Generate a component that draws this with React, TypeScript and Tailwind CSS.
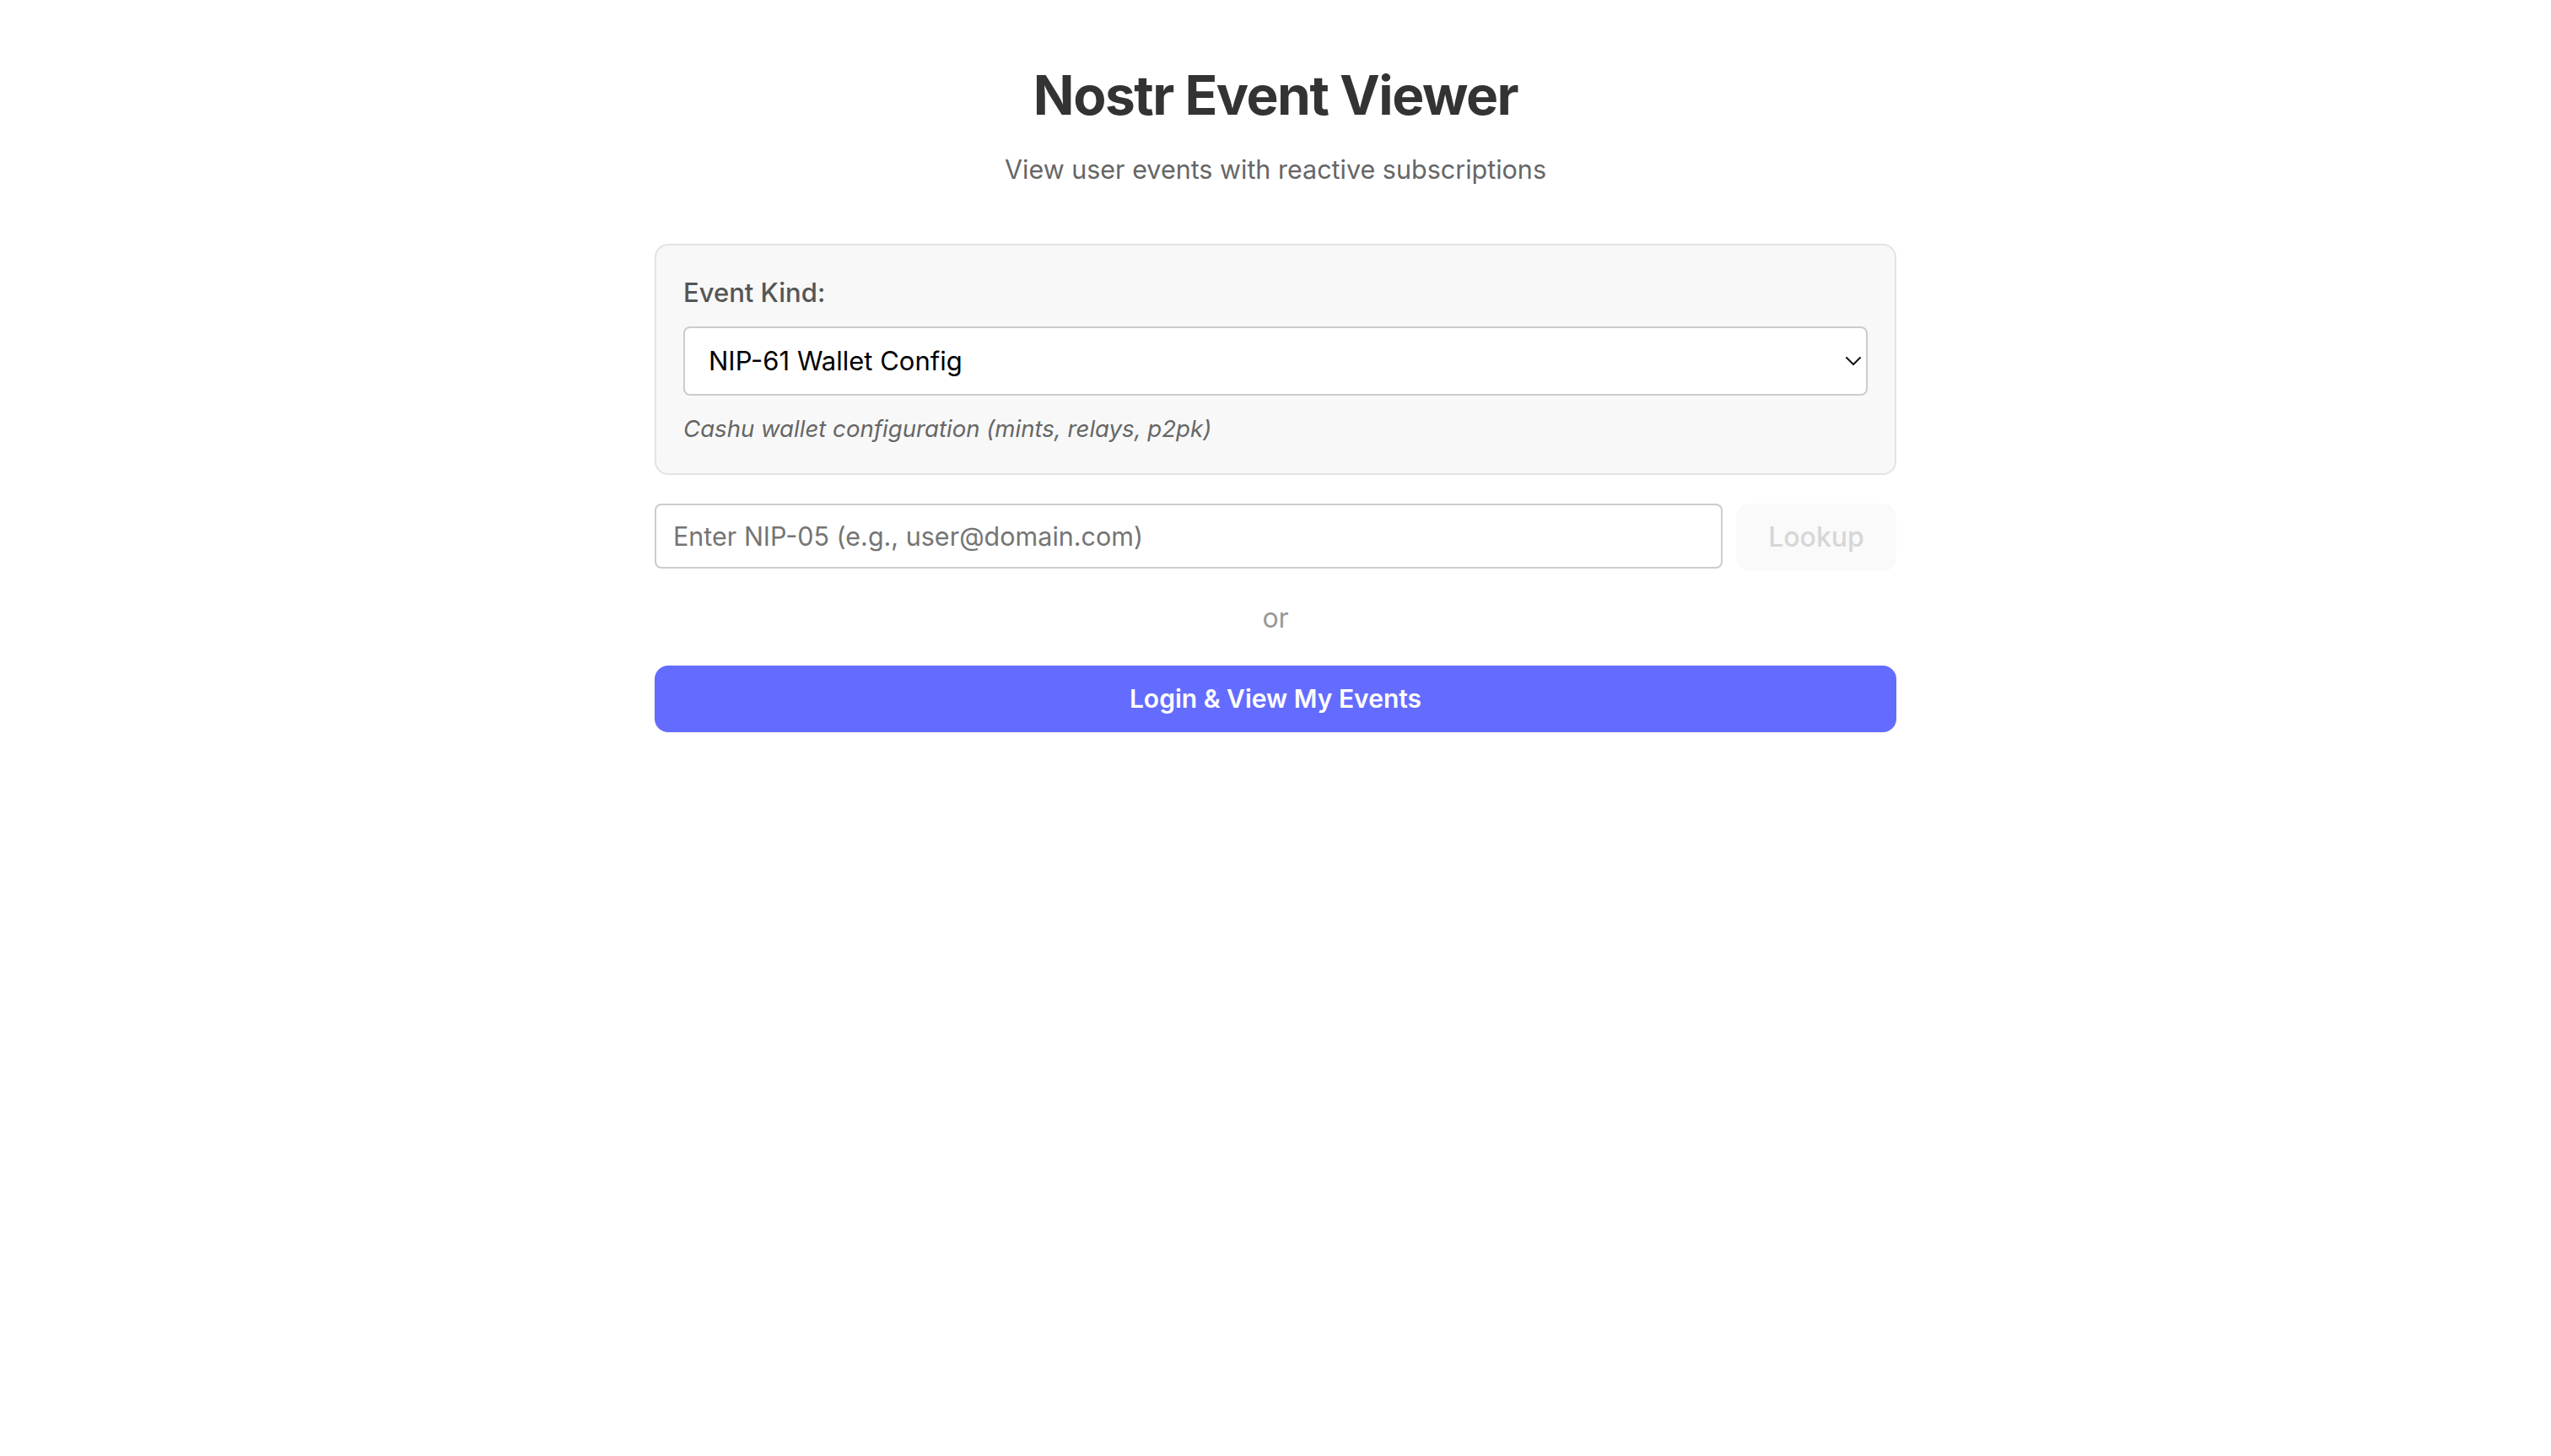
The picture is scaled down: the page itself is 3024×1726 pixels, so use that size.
import { useState } from "react";

const KINDS = [
  { value: "17375", label: "NIP-61 Wallet Config", hint: "Cashu wallet configuration (mints, relays, p2pk)" },
  { value: "1", label: "Short Text Note", hint: "Plain text notes" },
  { value: "0", label: "Metadata", hint: "User profile metadata" },
];

function Chevron() {
  return (
    <svg
      className="pointer-events-none absolute right-[8px] top-1/2 -translate-y-1/2"
      width="18"
      height="10"
      viewBox="0 0 18 10"
      fill="none"
    >
      <path d="M1 1l8 8 8-8" stroke="#111" strokeWidth="2" strokeLinecap="round" strokeLinejoin="round" />
    </svg>
  );
}

export default function App() {
  const [kind, setKind] = useState(KINDS[0].value);
  const [nip05, setNip05] = useState("");
  const current = KINDS.find((k) => k.value === kind) ?? KINDS[0];

  return (
    <div className="min-h-screen bg-white font-['Inter',sans-serif] antialiased">
      <div className="mx-auto max-w-[1600px] px-[64px] pt-[73px]">
        <h1 className="text-center text-[64px] leading-[80px] font-bold text-[#333] tracking-[-1.5px]">
          Nostr Event Viewer
        </h1>
        <p className="mt-[28px] text-center text-[30.5px] leading-[40px] text-[#666]">
          View user events with reactive subscriptions
        </p>

        <div className="mt-[68px] rounded-[16px] border-2 border-[#e3e3e3] bg-[#f8f8f8] px-[32px] pt-[36px] pb-[35px]">
          <label className="block text-[31px] leading-[40px] font-medium text-[#555]">Event Kind:</label>
          <div className="relative mt-[20px]">
            <select
              value={kind}
              onChange={(e) => setKind(e.target.value)}
              className="block h-[82px] w-full appearance-none rounded-[8px] border-2 border-[#ccc] bg-white pl-[28px] pr-[40px] text-[31px] text-black outline-none"
            >
              {KINDS.map((k) => (
                <option key={k.value} value={k.value}>
                  {k.label}
                </option>
              ))}
            </select>
            <Chevron />
          </div>
          <p className="mt-[21px] text-[27.6px] leading-[36px] italic text-[#666]">{current.hint}</p>
        </div>

        <div className="mt-[34px] flex gap-[16px]">
          <input
            value={nip05}
            onChange={(e) => setNip05(e.target.value)}
            placeholder="Enter NIP-05 (e.g., user@domain.com)"
            className="h-[77px] flex-1 rounded-[8px] border-2 border-[#ccc] bg-white px-[20px] text-[30.5px] text-black outline-none placeholder:text-[#757575]"
          />
          <button
            disabled={!nip05.trim()}
            className="h-[80px] w-[190px] rounded-[16px] bg-[#fafafa] text-[32px] font-medium text-[#d6d6d6]"
          >
            Lookup
          </button>
        </div>

        <div className="mt-[36px] text-center text-[32px] leading-[40px] text-[#999]">or</div>

        <button className="mt-[36px] h-[79px] w-full rounded-[16px] bg-[#646cff] text-[30px] font-semibold text-white">
          Login &amp; View My Events
        </button>
      </div>
    </div>
  );
}
